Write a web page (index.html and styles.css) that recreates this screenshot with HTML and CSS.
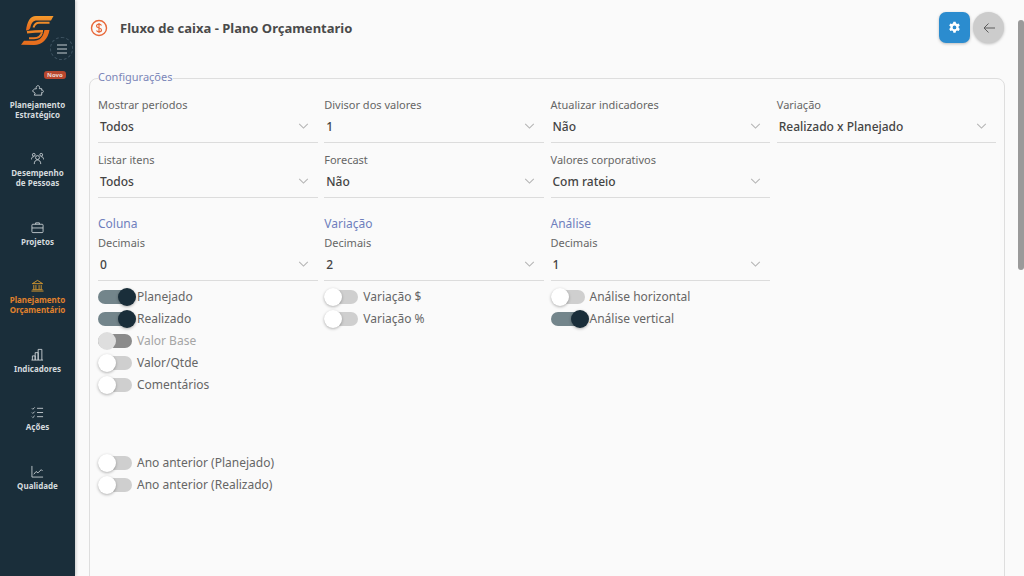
FILE: index.html
```html
<!DOCTYPE html>
<html lang="pt">
<head>
<meta charset="utf-8">
<title>Fluxo de caixa - Plano Orçamentario</title>
<link rel="stylesheet" href="styles.css">
</head>
<body>
<aside class="sidebar">
  <div class="brand">
    <svg class="logo" width="33" height="31" viewBox="0 0 33 31" fill="none">
      <defs><linearGradient id="lg" x1="0" y1="0" x2="0" y2="1"><stop offset="0" stop-color="#f59a2c"/><stop offset="1" stop-color="#e6651c"/></linearGradient></defs>
      <path fill="url(#lg)" d="M32.500 1H15C9 1 6 7 5 15.500C8 15.500 9 14 9.500 12C10.500 8 12 5.500 16 5.500H30Z"/>
      <path stroke="#f08c28" stroke-width="2" d="M28.500 7.800H18C15 7.800 13.500 9.500 12.500 12.500"/>
      <path stroke="#ee8426" stroke-width="2.400" d="M6 17.300C10 16.800 18 16.300 22 16.300"/>
      <path fill="#e76f1e" d="M0 29.800L3 25.800H13C19 25.800 22 22 23.500 15H28.500C27 24 21 30 13 30Z"/>
      <path stroke="#ea7a22" stroke-width="2" d="M21 17.500C20 21 17.500 23.300 13 23.300H8"/>
    </svg>
    <button class="menu-btn" aria-label="Menu">
      <svg width="12" height="10" viewBox="0 0 12 10" stroke="#c4ccd0" stroke-width="1" fill="none"><path d="M1 1h10M1 5h10M1 9h10"/></svg>
    </button>
  </div>
  <nav class="nav">
    <a class="nav-item">
      <span class="badge">Novo</span>
      <svg class="nav-icon" viewBox="0 0 14 14" fill="none" stroke="#d5dbde" stroke-width="0.9"><path d="M1.500 7.500 4 5.200H5.800C5 3 6.300 1.800 7.500 1.800C8.700 1.800 9.800 3 9 5H11.500V6.800C13 6.300 13.500 7.500 13.300 8.300C13 9.500 12 9.500 11.500 9V12H3.500L4.500 10Z"/></svg>
      <span>Planejamento<br>Estratégico</span>
    </a>
    <a class="nav-item">
      <svg class="nav-icon" viewBox="0 0 14 14" fill="none" stroke="#d5dbde" stroke-width="0.9"><circle cx="7" cy="6" r="2.100"/><path d="M3.500 13c0-3 1.500-4.400 3.500-4.400s3.500 1.400 3.500 4.400"/><circle cx="3" cy="3" r="1.500"/><circle cx="11" cy="3" r="1.500"/><path d="M.5 8c0-2 1-3 2.500-3M13.500 8c0-2-1-3-2.500-3"/></svg>
      <span>Desempenho<br>de Pessoas</span>
    </a>
    <a class="nav-item">
      <svg class="nav-icon" viewBox="0 0 14 14" fill="none" stroke="#d5dbde" stroke-width="0.9"><rect x="1" y="3.500" width="12" height="9" rx="1"/><path d="M5 3.500V2h4v1.500M1 7.500h12"/></svg>
      <span>Projetos</span>
    </a>
    <a class="nav-item nav-active">
      <svg class="nav-icon" viewBox="0 0 14 14" fill="none" stroke="#eda52e" stroke-width="0.9"><path d="M1.500 5 7 1.500 12.500 5ZM3 6.500V11M5.300 6.500V11M8.700 6.500V11M11 6.500V11M1.500 11.500h11M.5 13h13"/></svg>
      <span>Planejamento<br>Orçamentário</span>
    </a>
    <a class="nav-item">
      <svg class="nav-icon" viewBox="0 0 14 14" fill="none" stroke="#d5dbde" stroke-width="0.9"><path d="M1.500 13V8.500h3V13M4.500 13V5h3.200v8M7.700 13V1.500h4V13M.5 13h12.500"/></svg>
      <span>Indicadores</span>
    </a>
    <a class="nav-item">
      <svg class="nav-icon" viewBox="0 0 14 14" fill="none" stroke="#d5dbde" stroke-width="0.9"><path d="M6.500 2.500H13M6.500 7H13M6.500 11.500H13M1 2.500l1 1 2-2M1 7l1 1 2-2M1 11.500l1 1 2-2"/></svg>
      <span>Ações</span>
    </a>
    <a class="nav-item">
      <svg class="nav-icon" viewBox="0 0 14 14" fill="none" stroke="#d5dbde" stroke-width="0.9"><path d="M1 1v12h12M3 10l2.500-3 2 1.500L11 5l1.500 1.500"/></svg>
      <span>Qualidade</span>
    </a>
  </nav>
</aside>

<main class="main">
  <header class="topbar">
    <svg class="title-icon" width="18" height="18" viewBox="0 0 18 18" fill="none" stroke="#e8683a">
      <circle cx="9" cy="9" r="7.500" stroke-width="1.400"/>
      <path d="M11.500 6.500C11 5.500 10 5.200 9 5.200c-1.500 0-2.500.8-2.500 1.900C6.500 9.800 11.500 8.200 11.500 10.900c0 1.100-1 1.900-2.500 1.900-1 0-2-.3-2.500-1.300M9 4v10" stroke-width="1.200"/>
    </svg>
    <h1 class="title">Fluxo de caixa - Plano Orçamentario</h1>
    <div class="actions">
      <button class="btn-gear" aria-label="Configurar">
        <svg width="13" height="13" viewBox="0 0 14 14"><path fill-rule="evenodd" fill="#fff" d="M5.800.8h2.400l.4 1.700 1.200.7 1.700-.5 1.200 2.100-1.300 1.200v1.400l1.300 1.200-1.200 2.100-1.700-.5-1.200.7-.4 1.700H5.800l-.4-1.700-1.200-.7-1.700.5L1.300 8.600l1.300-1.200V6L1.300 4.800l1.200-2.100 1.700.5 1.200-.7ZM7 4.900a2 2 0 1 0 0 4 2 2 0 0 0 0-4Z"/></svg>
      </button>
      <button class="btn-back" aria-label="Voltar">
        <svg width="14" height="12" viewBox="0 0 14 12" fill="none" stroke="#5c5c5c" stroke-width="1"><path d="M13 6H2M6.500 1.500 2 6l4.500 4.500"/></svg>
      </button>
    </div>
  </header>

  <fieldset class="config">
    <legend class="legend">Configurações</legend>
    <div class="grid">
      <div class="field"><label class="label">Mostrar períodos</label><div class="select"><span>Todos</span><svg class="chev" viewBox="0 0 12 7"><path d="M1 1l5 5 5-5"/></svg></div></div>
      <div class="field"><label class="label">Divisor dos valores</label><div class="select"><span>1</span><svg class="chev" viewBox="0 0 12 7"><path d="M1 1l5 5 5-5"/></svg></div></div>
      <div class="field"><label class="label">Atualizar indicadores</label><div class="select"><span>Não</span><svg class="chev" viewBox="0 0 12 7"><path d="M1 1l5 5 5-5"/></svg></div></div>
      <div class="field"><label class="label">Variação</label><div class="select"><span>Realizado x Planejado</span><svg class="chev" viewBox="0 0 12 7"><path d="M1 1l5 5 5-5"/></svg></div></div>

      <div class="field"><label class="label">Listar itens</label><div class="select"><span>Todos</span><svg class="chev" viewBox="0 0 12 7"><path d="M1 1l5 5 5-5"/></svg></div></div>
      <div class="field"><label class="label">Forecast</label><div class="select"><span>Não</span><svg class="chev" viewBox="0 0 12 7"><path d="M1 1l5 5 5-5"/></svg></div></div>
      <div class="field"><label class="label">Valores corporativos</label><div class="select"><span>Com rateio</span><svg class="chev" viewBox="0 0 12 7"><path d="M1 1l5 5 5-5"/></svg></div></div>
      <div></div>

      <section class="col">
        <h2 class="section">Coluna</h2>
        <div class="field"><label class="label">Decimais</label><div class="select"><span>0</span><svg class="chev" viewBox="0 0 12 7"><path d="M1 1l5 5 5-5"/></svg></div></div>
        <div class="toggles">
          <div class="toggle on"><i class="switch"></i><span class="toggle-text">Planejado</span></div>
          <div class="toggle on"><i class="switch"></i><span class="toggle-text">Realizado</span></div>
          <div class="toggle disabled"><i class="switch"></i><span class="toggle-text">Valor Base</span></div>
          <div class="toggle"><i class="switch"></i><span class="toggle-text">Valor/Qtde</span></div>
          <div class="toggle"><i class="switch"></i><span class="toggle-text">Comentários</span></div>
          <div class="toggle-gap"></div>
          <div class="toggle"><i class="switch"></i><span class="toggle-text">Ano anterior (Planejado)</span></div>
          <div class="toggle"><i class="switch"></i><span class="toggle-text">Ano anterior (Realizado)</span></div>
        </div>
      </section>
      <section class="col">
        <h2 class="section">Variação</h2>
        <div class="field"><label class="label">Decimais</label><div class="select"><span>2</span><svg class="chev" viewBox="0 0 12 7"><path d="M1 1l5 5 5-5"/></svg></div></div>
        <div class="toggles">
          <div class="toggle"><i class="switch"></i><span class="toggle-text">Variação $</span></div>
          <div class="toggle"><i class="switch"></i><span class="toggle-text">Variação %</span></div>
        </div>
      </section>
      <section class="col">
        <h2 class="section">Análise</h2>
        <div class="field"><label class="label">Decimais</label><div class="select"><span>1</span><svg class="chev" viewBox="0 0 12 7"><path d="M1 1l5 5 5-5"/></svg></div></div>
        <div class="toggles">
          <div class="toggle"><i class="switch"></i><span class="toggle-text">Análise horizontal</span></div>
          <div class="toggle on"><i class="switch"></i><span class="toggle-text">Análise vertical</span></div>
        </div>
      </section>
    </div>
  </fieldset>
  <div class="scrollbar"></div>
</main>
</body>
</html>
```

FILE: styles.css
```css
* { box-sizing: border-box; }
html, body { height: 100%; }
body {
  margin: 0;
  display: flex;
  height: 576px;
  overflow: hidden;
  background: #fafafa;
  font-family: "Noto Sans", "Open Sans", sans-serif;
  color: #555;
}

/* Sidebar */
.sidebar {
  width: 75px;
  flex: none;
  background: #1a2e3a;
  display: flex;
  flex-direction: column;
  box-shadow: 1px 0 3px rgba(0,0,0,.2);
}
.brand { height: 64px; position: relative; padding: 15px 0 0 21px; }
.logo { display: block; }
.menu-btn {
  position: absolute;
  left: 50px;
  top: 37px;
  width: 23px;
  height: 23px;
  padding: 0;
  border: 1px dashed #3d5260;
  border-radius: 50%;
  background: #1a2e3a;
  display: flex;
  align-items: center;
  justify-content: center;
}
.nav { display: flex; flex-direction: column; align-items: stretch; padding-top: 20px; gap: 33.300px; }
.nav-item {
  position: relative;
  display: flex;
  flex-direction: column;
  align-items: center;
  gap: 3px;
  text-align: center;
  font-size: 8px;
  line-height: 9.500px;
  font-weight: 700;
  color: #d5dbde;
}
.nav-icon { width: 13px; height: 13px; display: block; flex: none; }
.nav-active { color: #e0812c; }
.badge {
  position: absolute;
  top: -13px;
  left: 44px;
  height: 8px;
  padding: 0 3px;
  border-radius: 3px;
  background: #b8472f;
  color: #f0d8d0;
  font-size: 6px;
  line-height: 8px;
  font-weight: 700;
}

/* Main */
.main { flex: 1; min-width: 0; position: relative; padding: 0 19px 0 14px; }
.topbar { height: 70px; display: flex; align-items: flex-start; padding-top: 12px; }
.title-icon { flex: none; margin: 7px 12px 0 1px; }
.title { margin: 6px 0 0; font-size: 13px; line-height: 20px; font-weight: 700; color: #4a4a4a; }
.actions { margin-left: auto; margin-right: 1px; display: flex; gap: 3px; }
.btn-gear, .btn-back {
  width: 31px;
  height: 31px;
  padding: 0;
  border: 0;
  display: flex;
  align-items: center;
  justify-content: center;
  box-shadow: 0 1px 3px rgba(0,0,0,.25);
}
.btn-gear { background: #2b8ccf; border-radius: 7px; }
.btn-back { background: #cccccc; border-radius: 50%; }

.config {
  margin: 0;
  padding: 11px 8px 0;
  height: 520px;
  min-width: 0;
  border: 1px solid #dedede;
  border-radius: 8px;
}
.legend { padding: 0 0 4px; font-size: 11px; line-height: 13px; color: #7a86b8; }
.grid {
  display: grid;
  grid-template-columns: repeat(4, 219.500px);
  column-gap: 6.750px;
  row-gap: 10px;
}
.col { display: flex; flex-direction: column; min-width: 0; }
.section { margin: 8px 0 4px; font-size: 12px; line-height: 16px; font-weight: 400; color: #6f7fbd; }
.label { display: block; font-size: 11px; line-height: 14px; color: #666; }
.select {
  height: 31px;
  padding: 0 9px 2px 2px;
  display: flex;
  align-items: center;
  justify-content: space-between;
  border-bottom: 1px solid #dcdcdc;
  font-size: 12px;
  font-weight: 500;
  color: #444;
}
.chev { width: 11px; height: 6px; fill: none; stroke: #b4b4b4; stroke-width: 1.200; }

.toggles { display: flex; flex-direction: column; padding-top: 5px; }
.toggle { height: 22px; display: flex; align-items: center; font-size: 12px; color: #666; }
.toggle-text { margin-bottom: 2px; }
.toggle-gap { height: 56px; }
.switch {
  position: relative;
  flex: none;
  width: 34px;
  height: 14px;
  margin-right: 5px;
  border-radius: 7px;
  background: #cfcfcf;
}
.switch::after {
  content: "";
  position: absolute;
  top: -2px;
  left: 0;
  width: 18px;
  height: 18px;
  border-radius: 50%;
  background: #fff;
  box-shadow: 0 1px 3px rgba(0,0,0,.3);
}
.on .switch { background: #73858b; }
.on .switch::after { left: 20px; background: #1a2e3a; }
.disabled { color: #a5a5a5; }
.disabled .switch { background: #8b8b8b; }
.disabled .switch::after { background: #dedede; box-shadow: none; }

.scrollbar {
  position: absolute;
  top: 20px;
  right: 0;
  width: 6px;
  height: 250px;
  border-radius: 3px;
  background: #9a9a9a;
}
```
